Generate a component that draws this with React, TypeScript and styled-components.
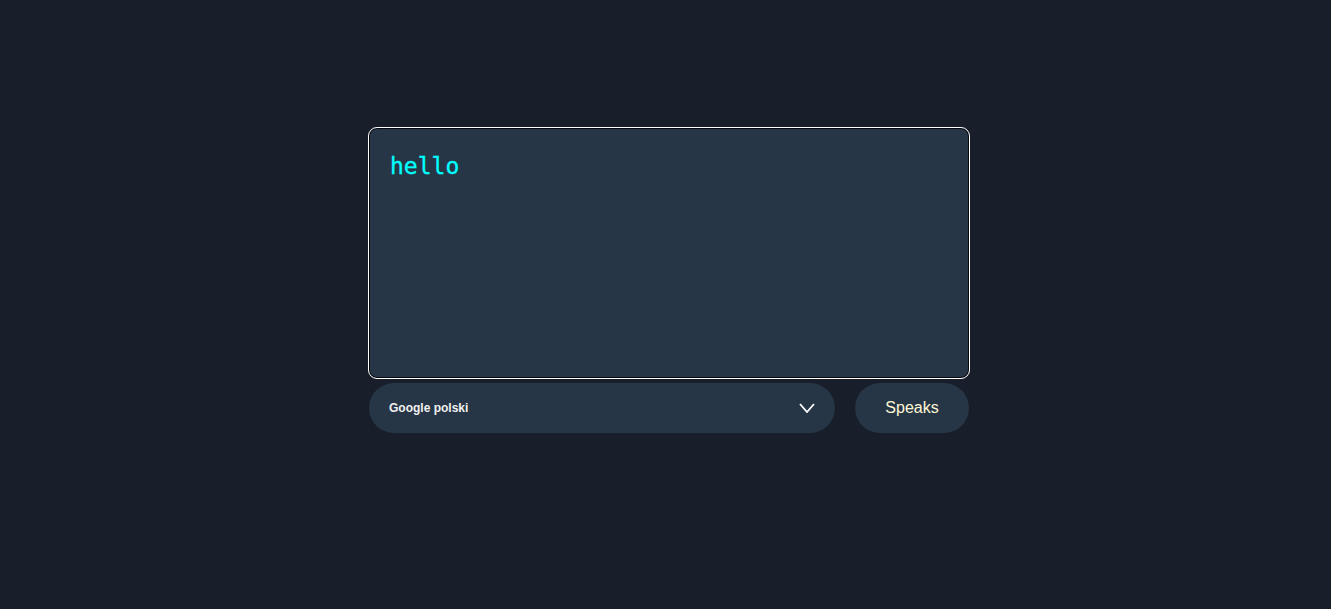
import React from "react";
import styled, { createGlobalStyle } from "styled-components";

const Global = createGlobalStyle`
  html, body { margin: 0; padding: 0; background: #181f2a; }
  body { font-family: "Liberation Sans", Arial, sans-serif; }
`;

const Page = styled.main`
  min-height: 609px;
  display: flex;
  justify-content: center;
  padding-top: 127px;
  padding-left: 7px;
  box-sizing: border-box;
`;

const Panel = styled.div`
  width: 602px;
  display: flex;
  flex-direction: column;
  gap: 4px;
`;

const TextArea = styled.textarea`
  box-sizing: border-box;
  width: 602px;
  height: 252px;
  resize: none;
  background: #263646;
  border: 1px solid #ffffff;
  box-shadow: inset 0 0 0 1px #05080c;
  border-radius: 9px;
  padding: 25px 21px 21px;
  color: #00ffff;
  font-family: "DejaVu Sans Mono", "Liberation Mono", monospace;
  font-size: 23px;
  line-height: 1.2;
  outline: none;
  -webkit-text-stroke: 0.3px #00ffff;
`;

const Controls = styled.div`
  display: flex;
  gap: 20px;
  padding-left: 1px;
  padding-right: 1px;
`;

const SelectBox = styled.div`
  flex: 1;
  height: 50px;
  border-radius: 25px;
  background: #263646;
  display: flex;
  align-items: center;
  justify-content: space-between;
  padding: 0 20px;
  color: #f0f0f0;
  font-weight: bold;
  font-size: 12px;
`;

const Chevron = styled.svg`
  width: 16px;
  height: 10px;
`;

const SpeakButton = styled.button`
  width: 114px;
  height: 50px;
  border: none;
  border-radius: 25px;
  background: #263646;
  color: #fff8d6;
  font-family: "Liberation Sans", Arial, sans-serif;
  font-size: 16px;
`;

export default function App() {
  return (
    <>
      <Global />
      <Page>
        <Panel>
          <TextArea defaultValue="hello" />
          <Controls>
            <SelectBox>
              <span>Google polski</span>
              <Chevron viewBox="0 0 16 10">
                <path d="M1 1 L8 9 L15 1" fill="none" stroke="#ffffff" strokeWidth="1.8" />
              </Chevron>
            </SelectBox>
            <SpeakButton>Speaks</SpeakButton>
          </Controls>
        </Panel>
      </Page>
    </>
  );
}
